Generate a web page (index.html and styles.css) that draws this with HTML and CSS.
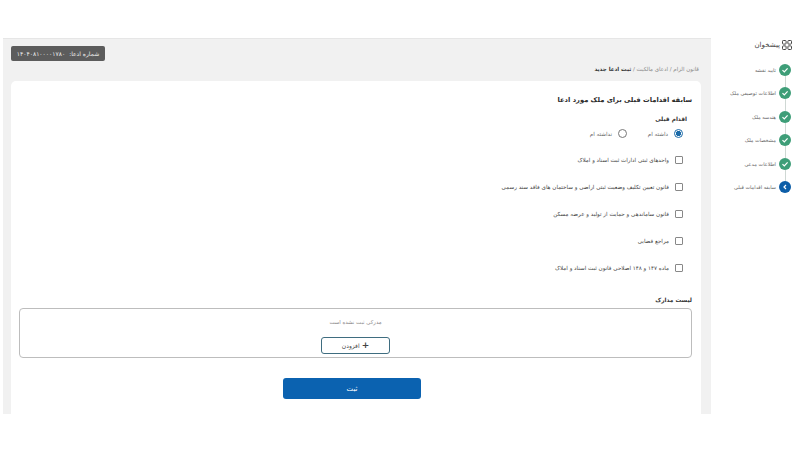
FILE: index.html
```html
<!DOCTYPE html>
<html lang="fa" dir="rtl">
<head>
<meta charset="utf-8">
<title>ثبت ادعا جدید</title>
<link rel="stylesheet" href="styles.css">
</head>
<body>
<div class="page">
  <aside class="sidebar">
    <div class="brand">
      <svg class="brand-icon" viewBox="0 0 10 10" width="10" height="10"><g fill="none" stroke="#444" stroke-width="1"><rect x="0.5" y="0.5" width="3.6" height="3.6" rx="0.8"/><rect x="5.9" y="0.5" width="3.6" height="3.6" rx="0.8"/><rect x="0.5" y="5.9" width="3.6" height="3.6" rx="0.8"/><rect x="5.9" y="5.9" width="3.6" height="3.6" rx="0.8"/></g></svg>
      <span>پیشخوان</span>
    </div>
    <ol class="steps">
      <li class="step"><span class="dot done"><svg viewBox="0 0 12 12" width="12" height="12"><path d="M3.5 6.2 5.3 8 8.6 4.4" fill="none" stroke="#fff" stroke-width="1.2"/></svg></span><span>تایید نقشه</span></li>
      <li class="step"><span class="dot done"><svg viewBox="0 0 12 12" width="12" height="12"><path d="M3.5 6.2 5.3 8 8.6 4.4" fill="none" stroke="#fff" stroke-width="1.2"/></svg></span><span>اطلاعات توصیفی ملک</span></li>
      <li class="step"><span class="dot done"><svg viewBox="0 0 12 12" width="12" height="12"><path d="M3.5 6.2 5.3 8 8.6 4.4" fill="none" stroke="#fff" stroke-width="1.2"/></svg></span><span>هندسه ملک</span></li>
      <li class="step"><span class="dot done"><svg viewBox="0 0 12 12" width="12" height="12"><path d="M3.5 6.2 5.3 8 8.6 4.4" fill="none" stroke="#fff" stroke-width="1.2"/></svg></span><span>مشخصات ملک</span></li>
      <li class="step"><span class="dot done"><svg viewBox="0 0 12 12" width="12" height="12"><path d="M3.5 6.2 5.3 8 8.6 4.4" fill="none" stroke="#fff" stroke-width="1.2"/></svg></span><span>اطلاعات مدعی</span></li>
      <li class="step"><span class="dot current"><svg viewBox="0 0 12 12" width="12" height="12"><path d="M7 4 5 6 7 8" fill="none" stroke="#fff" stroke-width="1.2"/></svg></span><span>سابقه اقدامات قبلی</span></li>
    </ol>
  </aside>
  <main class="panel">
    <div class="chip-row"><div class="chip"><span>شماره ادعا:</span><span>۱۴۰۴۰۸۱۰۰۰۰۱۷۸۰</span></div></div>
    <div class="crumbs"><span class="muted">قانون الزام / ادعای مالکیت /</span> <b>ثبت ادعا جدید</b></div>
    <section class="card">
      <h1>سابقه اقدامات قبلی برای ملک مورد ادعا</h1>
      <h2 class="sub">اقدام قبلی</h2>
      <div class="radios">
        <label class="radio"><span class="circle on"></span><span>داشته ام</span></label>
        <label class="radio"><span class="circle"></span><span>نداشته ام</span></label>
      </div>
      <ul class="checks">
        <li><span class="box"></span><span>واحدهای ثبتی ادارات ثبت اسناد و املاک</span></li>
        <li><span class="box"></span><span>قانون تعیین تکلیف وضعیت ثبتی اراضی و ساختمان های فاقد سند رسمی</span></li>
        <li><span class="box"></span><span>قانون ساماندهی و حمایت از تولید و عرضه مسکن</span></li>
        <li><span class="box"></span><span>مراجع قضایی</span></li>
        <li><span class="box"></span><span>ماده ۱۴۷ و ۱۴۸ اصلاحی قانون ثبت اسناد و املاک</span></li>
      </ul>
      <h2 class="docs-title">لیست مدارک</h2>
      <div class="docs">
        <p>مدرکی ثبت نشده است</p>
        <button class="add"><span class="plus">+</span><span>افزودن</span></button>
      </div>
      <button class="submit">ثبت</button>
    </section>
  </main>
</div>
</body>
</html>
```
FILE: styles.css
```css
* { box-sizing: border-box; }
html, body { margin: 0; height: 450px; overflow: hidden; background: #fff; }
body { font-family: "DejaVu Sans", "Noto Sans", sans-serif; color: #333; }
.page { display: flex; height: 414px; padding-top: 38px; padding-left: 3px; }
.sidebar { width: 89px; flex: none; padding: 1px 8px 0 0; }
.brand { display: flex; align-items: center; gap: 2px; height: 12px; font-size: 7px; color: #444; }
.brand-icon { flex: none; }
.steps { list-style: none; margin: 13px 0 0; padding: 0 1px 0 0; }
.step { position: relative; display: flex; align-items: center; gap: 3px; height: 12px; margin-bottom: 11.4px; font-size: 5px; color: #666; white-space: nowrap; }
.step:not(:last-child)::after { content: ""; position: absolute; right: 5.5px; top: 12px; width: 1px; height: 12px; background: #cfd8d4; }
.dot { width: 12px; height: 12px; border-radius: 50%; flex: none; display: block; }
.dot svg { display: block; }
.done { background: #3e9e78; }
.current { background: #0d5ea8; }
.panel { flex: 1; min-width: 0; background: #f1f1f1; padding: 7px 10px 0 8px; border-top: 1px solid #e6e6e6; display: flex; flex-direction: column; }
.chip-row { display: flex; justify-content: flex-end; }
.chip { width: 94px; height: 15px; background: #5c5c5c; color: #eee; border-radius: 2px; font-size: 6px; display: flex; align-items: center; justify-content: center; gap: 4px; }
.crumbs { font-size: 5.5px; height: 12px; line-height: 12px; margin-top: 2px; padding-right: 2px; color: #333; }
.muted { color: #888; }
.crumbs b { font-weight: 700; }
.card { flex: 1; margin-top: 6px; background: #fff; border-radius: 5px 5px 0 0; padding: 12px 9px 0 8px; }
h1 { margin: 0; font-size: 6.7px; line-height: 14px; font-weight: 700; color: #2b2b2b; }
.sub { margin: 7px 5px 0 0; font-size: 5.8px; line-height: 11px; font-weight: 700; color: #333; }
.radios { display: flex; gap: 11px; margin: 4px 9px 0 0; }
.radio { display: flex; align-items: center; gap: 6px; font-size: 5.6px; color: #666; width: 45px; }
.circle { width: 9px; height: 9px; border-radius: 50%; border: 1px solid #777; flex: none; background: #fff; }
.circle.on { border-color: #1b6aa8; background: radial-gradient(circle, #1b6aa8 0 2.4px, #fff 2.9px); }
.checks { list-style: none; margin: 8px 9px 0 0; padding: 0; }
.checks li { display: flex; align-items: center; gap: 6px; height: 27px; font-size: 5.6px; color: #444; }
.box { width: 8px; height: 8px; border: 1px solid #888; border-radius: 1px; flex: none; }
.docs-title { margin: 14px 0 0; font-size: 5.8px; line-height: 11px; font-weight: 700; color: #333; }
.docs { margin-top: 2px; height: 50px; border: 1px solid #bdbdbd; border-radius: 4px; display: flex; flex-direction: column; align-items: center; padding-top: 8px; }
.docs p { margin: 0; font-size: 5.4px; line-height: 10px; color: #888; }
.add { margin-top: 10px; width: 69px; height: 17px; border: 1px solid #3f6d80; border-radius: 3px; background: #fff; color: #444; font: 6px "DejaVu Sans", sans-serif; display: flex; align-items: center; justify-content: center; gap: 2px; padding: 0; }
.plus { font-size: 9px; font-weight: 700; line-height: 9px; }
.submit { display: block; margin: 20px 271px 0 0; width: 138px; height: 21px; border: 0; border-radius: 3px; background: #0b62b0; color: #fff; font: 7px "DejaVu Sans", sans-serif; padding: 0; }
```
